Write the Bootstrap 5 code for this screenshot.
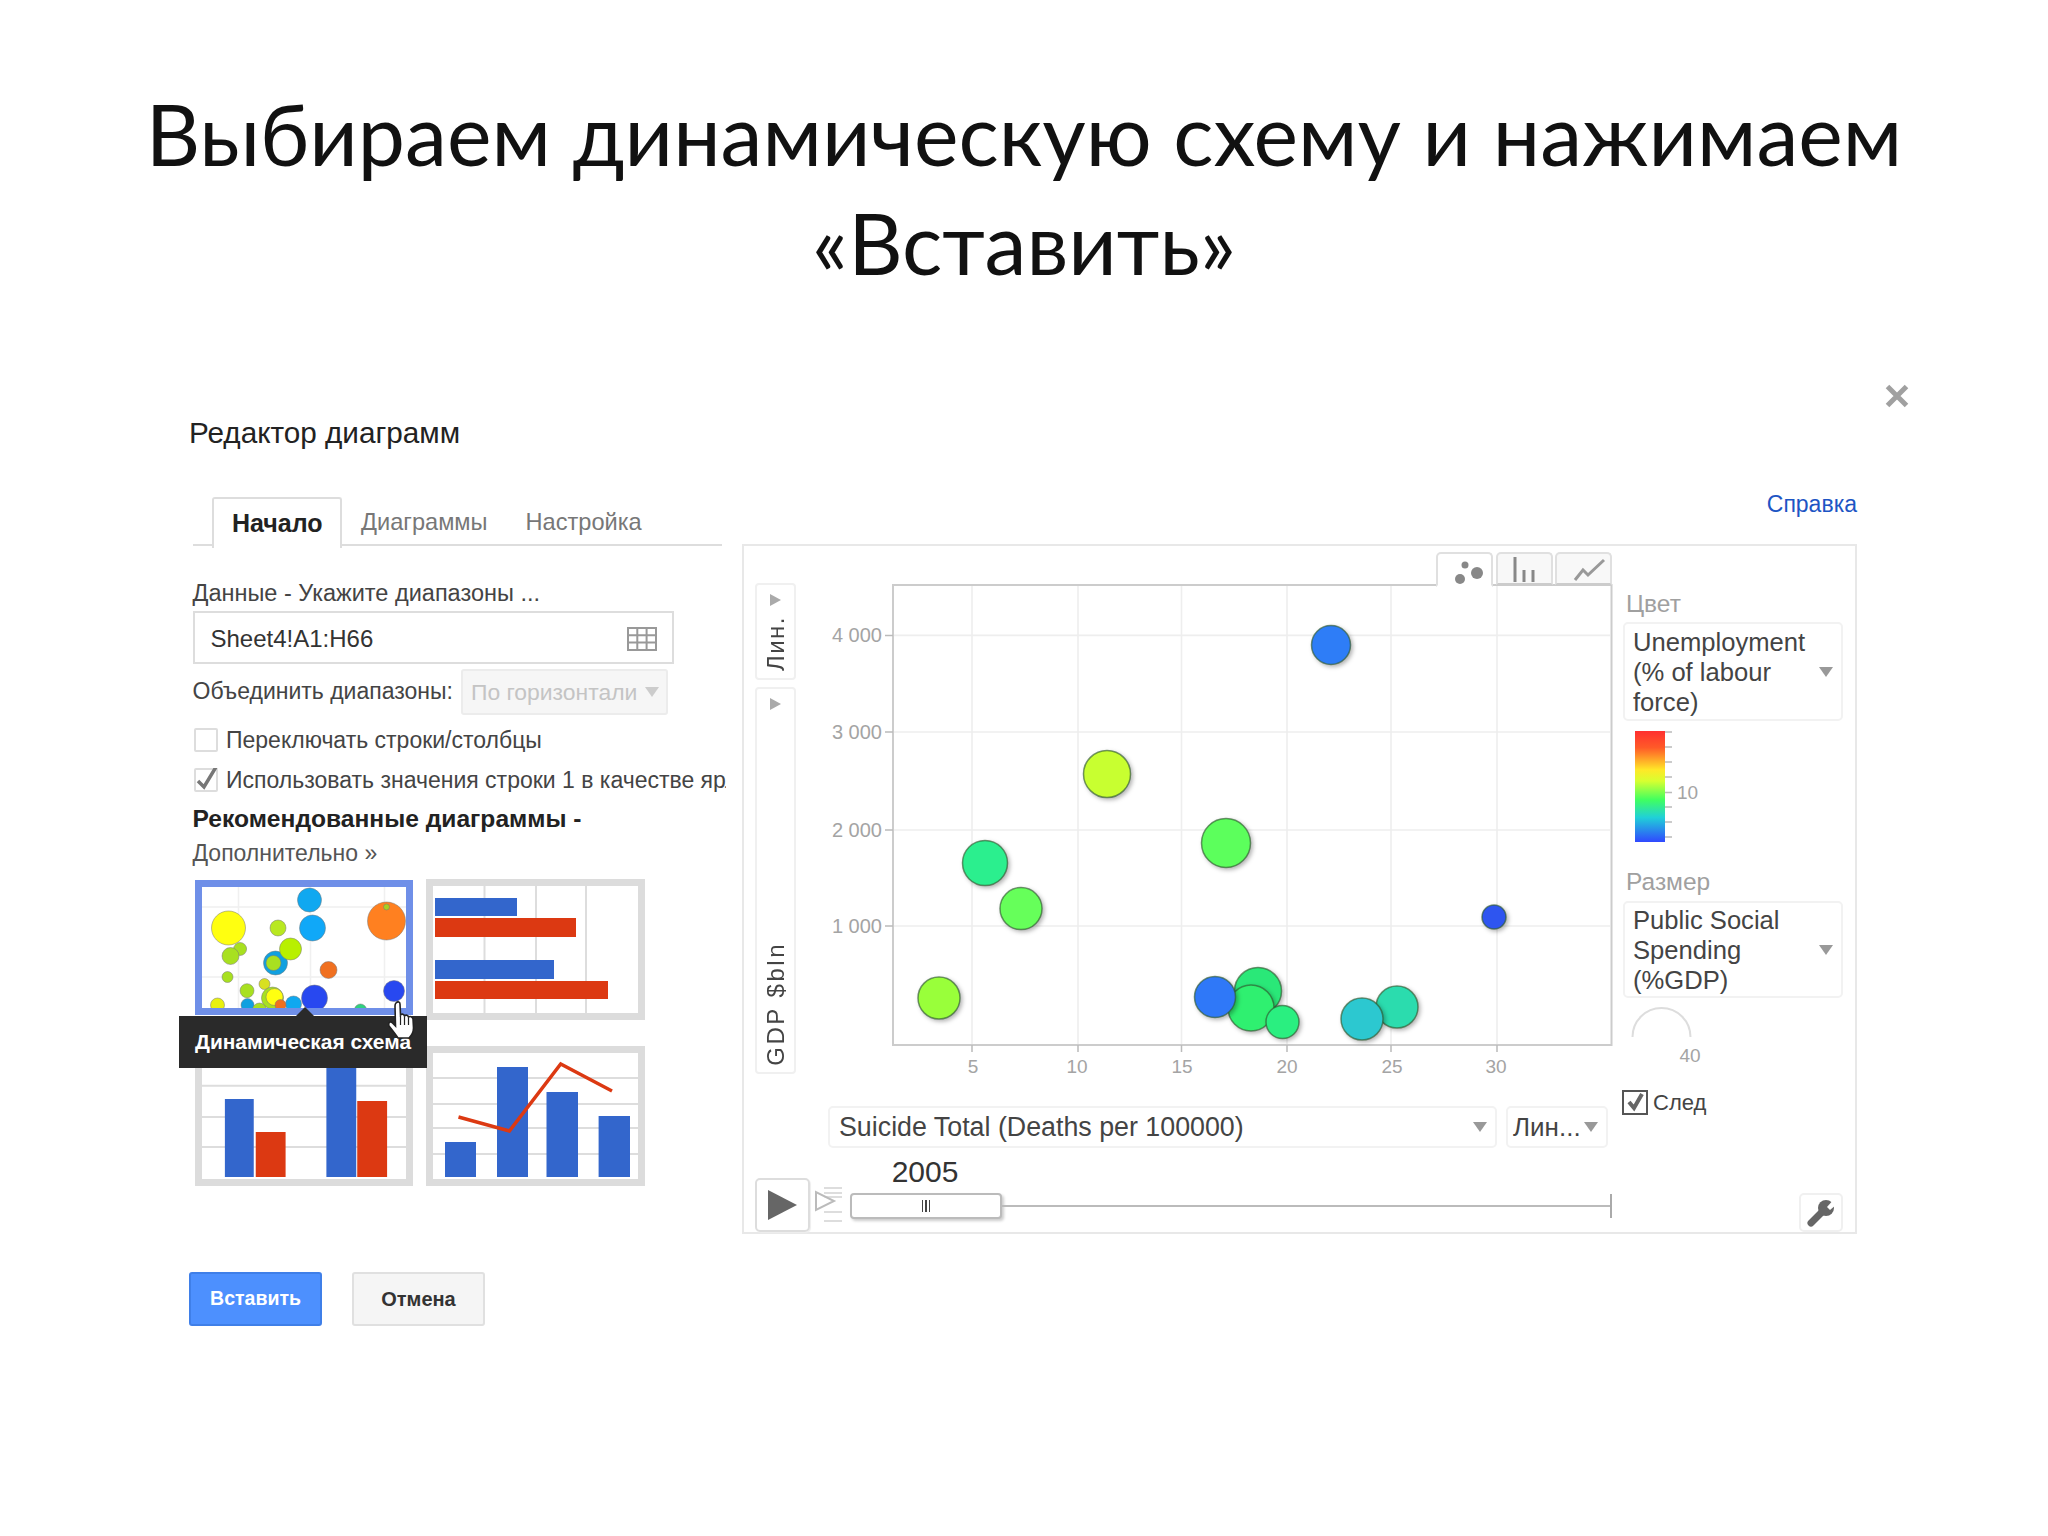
<!DOCTYPE html>
<html lang="ru">
<head>
<meta charset="utf-8">
<title>Выбираем динамическую схему</title>
<link href="https://cdn.jsdelivr.net/npm/bootstrap@5.3.0/dist/css/bootstrap.min.css" rel="stylesheet">
<style>
html,body{background:#fff;margin:0}
body{font-family:"Liberation Sans",Arial,sans-serif;color:#333}
.cv-slide{padding-top:79px;width:2048px;height:1536px;overflow:hidden}
.cv-title{font-family:Lato,"Open Sans",sans-serif;font-weight:400;font-size:84.300px;line-height:109px;margin:0 0 90px;text-align:center;color:#111}
.cv-dialog{margin-left:189px;width:1718px}
.cv-dtitle{font-size:29.700px;line-height:40px;margin-top:26px;color:#222}
.cv-close{width:20px;height:18px;display:block;overflow:visible}
.cv-main{width:1668px;margin-top:36px}
.cv-left{width:537px;padding-left:3.5px;flex:none}
.cv-right{margin-left:16px;width:1115px;flex:none}
.cv-help{height:55px;line-height:30px;text-align:right;font-size:23px}
.cv-help a{color:#1d55c4;text-decoration:none}
.nav-tabs.cv-tabs{margin-top:8px;padding-left:19.5px;border-bottom:2px solid #ddd;width:529.5px;height:49px;--bs-nav-tabs-border-width:0;flex-wrap:nowrap}
.cv-tabs .nav-link{font-size:23.600px;line-height:51px;padding:0 19px;height:49px;color:#777;border:0;border-radius:0;margin:0}
.cv-tabs .nav-link.active{font-size:25px;font-weight:700;color:#222;background:#fff;border:2px solid #ddd;border-bottom:0;padding:0 18px;width:130px;border-radius:3px 3px 0 0;margin-bottom:-2px;height:51px;line-height:49px}
.cv-line{font-size:23px;line-height:30px;white-space:nowrap;color:#444}
.cv-data{margin-top:32px;font-size:23.500px}
.cv-input{margin-top:3px;width:481.5px;height:53px;border:2px solid #ddd;padding:2px 15px 0 16px;font-size:24px;color:#333}
.cv-merge{margin-top:5px}
.cv-merge-label{margin-right:8px;margin-bottom:2px}
.cv-ddis{width:207px;height:46px;background:#f6f6f6;border:2px solid #ececec;border-radius:3px;padding:0 7px 0 8px;font-size:22.900px;color:#c4c4c4}
.cv-caret{display:inline-block;border-left:7px solid transparent;border-right:7px solid transparent;border-top:10px solid #999;flex:none}
.cv-caret.cv-pale{border-top-color:#ccc}
.cv-check{margin-top:13px;height:24px;width:533.5px;overflow:hidden;white-space:nowrap}
.cv-check+.cv-check{margin-top:16px}
.cv-box{width:24px;height:24px;border:2px solid #ddd;border-radius:2px;flex:none;margin:0 8px 0 1.5px;position:relative;overflow:visible}
.cv-box svg{display:block;overflow:visible}
.cv-rec{font-weight:700;font-size:24.600px;margin-top:12px;line-height:30px;color:#222}
.cv-more{margin-top:4px;color:#555}
.cv-thumbs{position:relative;margin:11px 0 0 2.5px;display:grid;grid-template-columns:218px 219px;grid-template-rows:141px 140px;column-gap:13px;row-gap:26px;width:450px}
.cv-thumb{border:7px solid #dcdcdc;background:#fff;overflow:hidden}
.cv-thumb svg{display:block;width:100%;height:100%}
.cv-thumb.cv-sel{border-color:#6f8fe8;height:135px;margin-top:1px}
.cv-tip{position:absolute;left:-16px;top:137px;width:248px;height:52px;background:#2a2a2a;color:#fff;font-weight:700;font-size:20.900px;line-height:52px;text-align:center}
.cv-tip::before{content:"";position:absolute;left:117px;top:-9px;border-left:9px solid transparent;border-right:9px solid transparent;border-bottom:9px solid #2a2a2a}
.cv-hand{position:absolute;left:193px;top:122px;width:27px;height:38px}
.cv-panel{border:2px solid #e8e8e8;height:690px;background:#fff}
.cv-chartside{width:868px;flex:none}
.cv-axis{margin-left:11px;width:41px;margin-top:37px;flex:none}
.cv-axbtn{border:2px solid #f0f0f0;border-radius:4px;position:relative;width:41px;color:#444;font-size:24px}
.cv-axbtn.cv-a1{height:97px}
.cv-axbtn.cv-a2{height:387px;margin-top:7px}
.cv-tri{position:absolute;left:13px;top:8.5px;border-top:6px solid transparent;border-bottom:6px solid transparent;border-left:11px solid #aaa}
.cv-vtext{position:absolute;left:0;width:37px;bottom:6px;writing-mode:vertical-rl;transform:rotate(180deg);line-height:37px;white-space:nowrap;letter-spacing:2.500px}
.cv-a1 .cv-vtext{letter-spacing:1.500px;bottom:7px}
.cv-chartcol{margin:6px 0 0 16px;width:800px;flex:none}
.cv-ctabs{height:33px;justify-content:flex-end;gap:2.5px;position:relative}
.cv-ctab{width:57px;height:33px;border:2px solid #e0e0e0;border-radius:5px 5px 0 0;background:#f8f8f8;border-bottom:2px solid #ccc}
.cv-ctab.cv-on{background:#fff;border-bottom-color:#fff;position:relative;z-index:2;height:35px;margin-bottom:-2px}
.cv-ctab svg{display:block}
.cv-plot{display:block;width:800px;height:500px;overflow:visible}
.cv-plot text{font-family:"Liberation Sans",Arial,sans-serif;font-size:19px;fill:#a4a4a4}
.cv-plot .cv-ylab text{font-size:20px}
.cv-bubbles circle{stroke:#2f5a2f;stroke-opacity:.65;stroke-width:1.5;filter:drop-shadow(2px 2px 2px rgba(0,0,0,.3))}
.cv-sel-box{border:2px solid #f2f2f2;border-radius:5px;font-size:25.600px;color:#444;background:#fff}
.cv-selrow{margin:21px 0 0 84px;gap:9px}
.cv-xsel{width:669px;height:42px;padding:0 8px 0 9px;font-size:26.800px}
.cv-lsel{width:102px;height:42px;padding:0 8px 0 5px;font-size:26px}
.cv-playrow{margin-top:9px;align-items:flex-end}
.cv-play{width:55px;height:54px;margin-left:11px;border:2px solid #ddd;border-radius:5px;flex:none;box-shadow:1px 1px 1px #eee}
.cv-play::after{content:"";border-left:29px solid #666;border-top:15px solid transparent;border-bottom:15px solid transparent}
.cv-speed{width:27px;height:35px;margin:0 8px 10px 5px;flex:none;display:block}
.cv-slider{width:762px;flex:none}
.cv-year{width:150px;text-align:center;font-size:30px;line-height:30px;color:#333;margin-bottom:6px}
.cv-track{height:26px;margin-bottom:13px}
.cv-handle{width:152px;height:26px;border:2px solid #bbb;border-radius:4px;background:#fff;box-shadow:2px 2px 3px rgba(0,0,0,.2);flex:none;font-size:0}
.cv-grip{width:8px;height:12px;border-left:1.5px solid #444;border-right:1.5px solid #444;position:relative}
.cv-grip::after{content:"";position:absolute;left:2px;top:0;width:1.5px;height:12px;background:#444}
.cv-rail{height:2px;background:#bbb;flex:1}
.cv-end{width:2px;height:24px;background:#aaa;flex:none}
.cv-legend{margin-left:11px;width:220px;flex:none;height:686px}
.cv-ltitle{font-size:24.500px;line-height:30px;color:#a0a0a0;padding-left:3px}
.cv-ltitle.cv-t1{margin-top:43px}
.cv-ltitle.cv-t2{margin-top:25px}
.cv-dd{height:99px;margin-top:3px;padding:0 8px 0 8px}
.cv-dd.cv-d2{height:97px;margin-top:4px}
.cv-dd>div{width:177px;line-height:30px}
.cv-scale{display:block;width:80px;height:111px;margin:10px 0 0 12px;overflow:visible}
.cv-scale text,.cv-arc text{font-family:"Liberation Sans",Arial,sans-serif;font-size:19px;fill:#a4a4a4}
.cv-arc{display:block;width:90px;height:63px;margin:6px 0 0 6px;overflow:visible}
.cv-trail{margin-top:23px;font-size:22px;color:#444;line-height:25px}
.cv-tbox{width:26px;height:25px;border:2px solid #555;margin:0 5px 0 -1px;flex:none}
.cv-tbox svg{display:block;overflow:visible}
.cv-wrench{margin-top:auto;margin-left:auto;width:44px;height:39px;border:2px solid #f0f0f0;border-radius:5px;flex:none}
.cv-actions{margin-top:38px;gap:30px}
.btn.cv-btn{width:133px;height:54px;font-size:19.500px;font-weight:700;border-radius:3px;padding:0;display:flex;align-items:center;justify-content:center}
.btn.cv-ok{background:#4d90fe;border:2px solid #3f7fe8;color:#fff}
.btn.cv-no{background:#f5f5f5;border:2px solid #e0e0e0;color:#333;font-size:20px}
</style>
</head>
<body>
<main class="cv-slide">
  <h1 class="cv-title">Выбираем динамическую схему и нажимаем<br>«Вставить»</h1>
  <div class="cv-dialog">
    <header class="d-flex justify-content-between align-items-start">
      <div class="cv-dtitle">Редактор диаграмм</div>
      <svg class="cv-close" viewBox="0 0 20 18" aria-label="Закрыть"><path d="M0.500 -0.500 L19.500 18.500 M19.500 -0.500 L0.500 18.500" stroke="#a0a0a0" stroke-width="5" fill="none"/></svg>
    </header>

    <div class="cv-main d-flex align-items-start">
      <section class="cv-left">
        <ul class="nav nav-tabs cv-tabs">
          <li class="nav-item"><a class="nav-link active" href="#">Начало</a></li>
          <li class="nav-item"><a class="nav-link" href="#">Диаграммы</a></li>
          <li class="nav-item"><a class="nav-link" href="#">Настройка</a></li>
        </ul>
        <div class="cv-line cv-data">Данные - Укажите диапазоны ...</div>
        <div class="cv-input d-flex align-items-center justify-content-between">
          <span>Sheet4!A1:H66</span>
          <svg width="30" height="24" viewBox="0 0 30 24" fill="none" stroke="#999" stroke-width="2"><rect x="1" y="1" width="28" height="22"/><path d="M10.3 1V23M19.6 1V23M1 8.3H29M1 15.6H29"/></svg>
        </div>
        <div class="cv-merge d-flex align-items-center">
          <span class="cv-line cv-merge-label">Объединить диапазоны:</span>
          <span class="cv-ddis d-flex align-items-center justify-content-between"><span>По горизонтали</span><i class="cv-caret cv-pale"></i></span>
        </div>
        <div class="cv-check d-flex align-items-center">
          <span class="cv-box"></span><span class="cv-line">Переключать строки/столбцы</span>
        </div>
        <div class="cv-check d-flex align-items-center">
          <span class="cv-box"><svg width="20" height="20" viewBox="0 0 20 20"><path d="M2 11 L8 17 L20 -3" fill="none" stroke="#777" stroke-width="3.5"/></svg></span><span class="cv-line">Использовать значения строки 1 в качестве ярлыков</span>
        </div>
        <div class="cv-rec">Рекомендованные диаграммы -</div>
        <div class="cv-line cv-more">Дополнительно »</div>

        <div class="cv-thumbs">
          <div class="cv-thumb cv-sel">
            <svg viewBox="201 887 205 121" preserveAspectRatio="xMidYMin slice">
              <path d="M238 887V1015M310 887V1015M384 887V1015M201 907H406M201 977H406" stroke="#f0f0f0" stroke-width="1.5" fill="none"/>
              <g stroke="#777" stroke-opacity=".5">
                <circle cx="309" cy="900" r="12" fill="#10a8f0"/>
                <circle cx="228" cy="928" r="17" fill="#ffff10"/>
                <circle cx="386" cy="921" r="19" fill="#ff8020"/>
                <circle cx="386" cy="907" r="3" fill="#a8d020"/>
                <circle cx="277.5" cy="928" r="8" fill="#b8e820"/>
                <circle cx="312" cy="928" r="13" fill="#10a8f8"/>
                <circle cx="275" cy="963" r="12" fill="#10a0e0"/>
                <circle cx="273" cy="963" r="7.5" fill="#a8e020"/>
                <circle cx="290" cy="949" r="11" fill="#b8f000"/>
                <circle cx="239.6" cy="949" r="6.5" fill="#a8e020"/>
                <circle cx="230" cy="956" r="8.5" fill="#a8e020"/>
                <circle cx="328" cy="970" r="8.5" fill="#f07020"/>
                <circle cx="227" cy="977" r="5.5" fill="#a8e020"/>
                <circle cx="264" cy="984" r="5.5" fill="#d8e020"/>
                <circle cx="246.5" cy="990.7" r="7" fill="#a8e020"/>
                <circle cx="272" cy="998" r="11" fill="#a8e020"/>
                <circle cx="274" cy="997" r="8.5" fill="#ffff10"/>
                <circle cx="314" cy="998" r="13" fill="#2848f0"/>
                <circle cx="393.5" cy="991" r="10.5" fill="#2848f0"/>
                <circle cx="217" cy="1005" r="7" fill="#e8f010"/>
                <circle cx="247" cy="1005" r="6.5" fill="#10a0e0"/>
                <circle cx="259" cy="1010" r="7" fill="#a8e020"/>
                <circle cx="293" cy="1004" r="8" fill="#10a8f0"/>
                <circle cx="280" cy="1005" r="5.5" fill="#f07020"/>
                <circle cx="360" cy="1010" r="6" fill="#30d080"/>
              </g>
            </svg>
          </div>
          <div class="cv-thumb">
            <svg viewBox="433 886 205 127" preserveAspectRatio="none">
              <path d="M484.5 886V1013M536 886V1013M586 886V1013" stroke="#ddd" stroke-width="2"/>
              <rect x="435" y="898" width="82" height="18" fill="#3366cc"/>
              <rect x="435" y="918" width="141" height="19" fill="#dc3912"/>
              <rect x="435" y="960" width="119" height="19" fill="#3366cc"/>
              <rect x="435" y="981" width="173" height="18" fill="#dc3912"/>
            </svg>
          </div>
          <div class="cv-thumb">
            <svg viewBox="201 1053 205 126" preserveAspectRatio="none">
              <path d="M201 1085.7H406M201 1117H406M201 1147H406" stroke="#ddd" stroke-width="2"/>
              <rect x="224" y="1099" width="29" height="78" fill="#3366cc"/>
              <rect x="255" y="1132" width="30" height="45" fill="#dc3912"/>
              <rect x="326" y="1060" width="30" height="117" fill="#3366cc"/>
              <rect x="357" y="1101" width="30" height="76" fill="#dc3912"/>
            </svg>
          </div>
          <div class="cv-thumb">
            <svg viewBox="433 1053 205 126" preserveAspectRatio="none">
              <path d="M433 1078H638M433 1104H638M433 1128H638M433 1154H638" stroke="#ddd" stroke-width="2"/>
              <rect x="445" y="1142" width="31" height="35" fill="#3366cc"/>
              <rect x="497" y="1067" width="31" height="110" fill="#3366cc"/>
              <rect x="546.5" y="1092" width="31.5" height="85" fill="#3366cc"/>
              <rect x="598.6" y="1116" width="31.4" height="61" fill="#3366cc"/>
              <path d="M458.5 1117L509.4 1131L560.7 1064L612 1091" fill="none" stroke="#dc3912" stroke-width="3.5"/>
            </svg>
          </div>
          <div class="cv-tip">Динамическая схема</div>
          <svg class="cv-hand" viewBox="0 0 27 38"><path d="M8 2 C10 0 12 1 12 3 L12.5 14 C14 12.5 16 13 16.5 15 C18 13.5 20 14 20.5 16 C22 15 24.5 15.5 25 18 L25.5 27 C25.5 32 23 35 21 37 L10 37 C8 34 5 30 1 25 C0 22 2 20 4 21.5 L7.5 25 L7 5 C7 3.5 7.5 2.5 8 2 Z" fill="#fff" stroke="#222" stroke-width="1.6"/><path d="M12.5 15V24M16.5 16V24M20.5 17V24" stroke="#222" stroke-width="1.2"/></svg>
        </div>
      </section>

      <section class="cv-right">
        <div class="cv-help"><a href="#">Справка</a></div>
        <div class="cv-panel d-flex">
          <div class="cv-chartside">
            <div class="d-flex">
              <div class="cv-axis">
                <div class="cv-axbtn cv-a1"><i class="cv-tri"></i><span class="cv-vtext">Лин.</span></div>
                <div class="cv-axbtn cv-a2"><i class="cv-tri"></i><span class="cv-vtext">GDP $bln</span></div>
              </div>
              <div class="cv-chartcol">
                <div class="cv-ctabs d-flex">
                  <div class="cv-ctab cv-on"><svg width="53" height="31" viewBox="1438 554 53 31"><circle cx="1465" cy="565" r="3.5" fill="#888"/><circle cx="1477" cy="573" r="6" fill="#888"/><circle cx="1460" cy="579" r="5" fill="#888"/></svg></div>
                  <div class="cv-ctab"><svg width="53" height="29" viewBox="1498 554 53 29"><path d="M1515 557V582M1524 570V582M1533 570V582" stroke="#888" stroke-width="3"/></svg></div>
                  <div class="cv-ctab"><svg width="53" height="29" viewBox="1557 554 53 29"><path d="M1575 580L1583 570L1588 575L1604 560" stroke="#999" stroke-width="3" fill="none"/></svg></div>
                </div>
                <svg class="cv-plot" viewBox="812 585 800 500">
                  <rect x="893" y="585" width="718.5" height="460" fill="#fff" stroke="#ccc" stroke-width="2"/>
                  <path d="M972 586V1044M1078 586V1044M1181.5 586V1044M1287 586V1044M1391 586V1044M1497 586V1044M894 635.4H1610M894 732H1610M894 830H1610M894 926H1610" stroke="#eee" stroke-width="1.6" fill="none"/>
                  <path d="M885 635.4H893M885 732H893M885 830H893M885 926H893M972 1045V1052M1078 1045V1052M1181.5 1045V1052M1287 1045V1052M1391 1045V1052M1497 1045V1052" stroke="#bbb" stroke-width="1.5" fill="none"/>
                  <g class="cv-ylab" text-anchor="end">
                    <text x="882" y="642">4 000</text><text x="882" y="738.5">3 000</text><text x="882" y="836.5">2 000</text><text x="882" y="932.5">1 000</text>
                  </g>
                  <g text-anchor="middle">
                    <text x="973" y="1073">5</text><text x="1077" y="1073">10</text><text x="1182" y="1073">15</text><text x="1287" y="1073">20</text><text x="1392" y="1073">25</text><text x="1496" y="1073">30</text>
                  </g>
                  <g class="cv-bubbles">
                    <circle cx="1331" cy="645" r="19.5" fill="#2e7df7"/>
                    <circle cx="1107" cy="774" r="23.5" fill="#c8ff30"/>
                    <circle cx="1226" cy="843" r="24.5" fill="#5cff5c"/>
                    <circle cx="985" cy="863" r="22.5" fill="#2bef8e"/>
                    <circle cx="1021" cy="908.6" r="21" fill="#66ff5a"/>
                    <circle cx="939" cy="998" r="21" fill="#99ff3a"/>
                    <circle cx="1494" cy="917" r="12" fill="#2e55f0"/>
                    <circle cx="1258" cy="991" r="23.5" fill="#2ae878"/>
                    <circle cx="1251" cy="1008" r="23" fill="#2ff070"/>
                    <circle cx="1215" cy="997" r="20.5" fill="#2f78f8"/>
                    <circle cx="1282.5" cy="1022" r="16.5" fill="#2aef80"/>
                    <circle cx="1397" cy="1007" r="21" fill="#2bdcae"/>
                    <circle cx="1362" cy="1019" r="21" fill="#2cc8d0"/>
                  </g>
                </svg>
              </div>
            </div>
            <div class="cv-selrow d-flex">
              <div class="cv-sel-box cv-xsel d-flex align-items-center justify-content-between"><span>Suicide Total (Deaths per 100000)</span><i class="cv-caret"></i></div>
              <div class="cv-sel-box cv-lsel d-flex align-items-center justify-content-between"><span>Лин...</span><i class="cv-caret"></i></div>
            </div>
            <div class="cv-playrow d-flex">
              <div class="cv-play d-flex align-items-center justify-content-center"></div>
              <svg class="cv-speed" viewBox="816 1187 27 35"><path d="M825 1188H843M825 1193H843M825 1197H843M825 1212H843M825 1221H843" stroke="#ddd" stroke-width="2"/><path d="M817 1192V1210L835 1201Z" fill="#fff" fill-opacity=".6" stroke="#bbb" stroke-width="2"/></svg>
              <div class="cv-slider">
                <div class="cv-year">2005</div>
                <div class="cv-track d-flex align-items-center">
                  <div class="cv-handle d-flex align-items-center justify-content-center"><span class="cv-grip"></span></div>
                  <div class="cv-rail"></div>
                  <div class="cv-end"></div>
                </div>
              </div>
            </div>
          </div>
          <aside class="cv-legend d-flex flex-column">
            <div class="cv-ltitle cv-t1">Цвет</div>
            <div class="cv-sel-box cv-dd d-flex align-items-center justify-content-between"><div>Unemployment (% of labour force)</div><i class="cv-caret"></i></div>
            <svg class="cv-scale" viewBox="0 0 80 111">
              <defs><linearGradient id="cvg" x1="0" y1="0" x2="0" y2="1"><stop offset="0" stop-color="#ff3030"/><stop offset=".15" stop-color="#ff5a28"/><stop offset=".35" stop-color="#ffe828"/><stop offset=".45" stop-color="#d8ff30"/><stop offset=".62" stop-color="#40ff60"/><stop offset=".78" stop-color="#20d0d8"/><stop offset="1" stop-color="#3048ff"/></linearGradient></defs>
              <rect width="30" height="111" fill="url(#cvg)"/>
              <path d="M30 1H37M30 16H37M30 31H37M30 46H37M30 61.500H37M30 76H37M30 91H37M30 106H37" stroke="#bbb" stroke-width="1.5"/>
              <text x="42" y="68">10</text>
            </svg>
            <div class="cv-ltitle cv-t2">Размер</div>
            <div class="cv-sel-box cv-dd cv-d2 d-flex align-items-center justify-content-between"><div>Public Social Spending (%GDP)</div><i class="cv-caret"></i></div>
            <svg class="cv-arc" viewBox="1629 1005 90 63">
              <path d="M1632.500 1038A29 29 0 0 1 1690.500 1038" fill="none" stroke="#ddd" stroke-width="2"/>
              <text x="1690" y="1063" text-anchor="middle">40</text>
            </svg>
            <div class="cv-trail d-flex align-items-center">
              <span class="cv-tbox"><svg width="22" height="21" viewBox="0 0 22 21"><path d="M5 10 L10 16 L18 2" fill="none" stroke="#666" stroke-width="4"/></svg></span><span>След</span>
            </div>
            <div class="cv-wrench d-flex align-items-center justify-content-center">
              <svg width="28" height="28" viewBox="0 0 28 28"><path d="M4 24 L15 13" stroke="#666" stroke-width="7" stroke-linecap="round"/><circle cx="19" cy="9" r="8" fill="#666"/><path d="M20 8 L28 -1 L30 5 L23 11 Z" fill="#fff"/></svg>
            </div>
          </aside>
        </div>
      </section>
    </div>

    <div class="cv-actions d-flex">
      <button type="button" class="btn cv-btn cv-ok">Вставить</button>
      <button type="button" class="btn cv-btn cv-no">Отмена</button>
    </div>
  </div>
</main>
<script src="https://cdn.jsdelivr.net/npm/bootstrap@5.3.0/dist/js/bootstrap.bundle.min.js"></script>
</body>
</html>
